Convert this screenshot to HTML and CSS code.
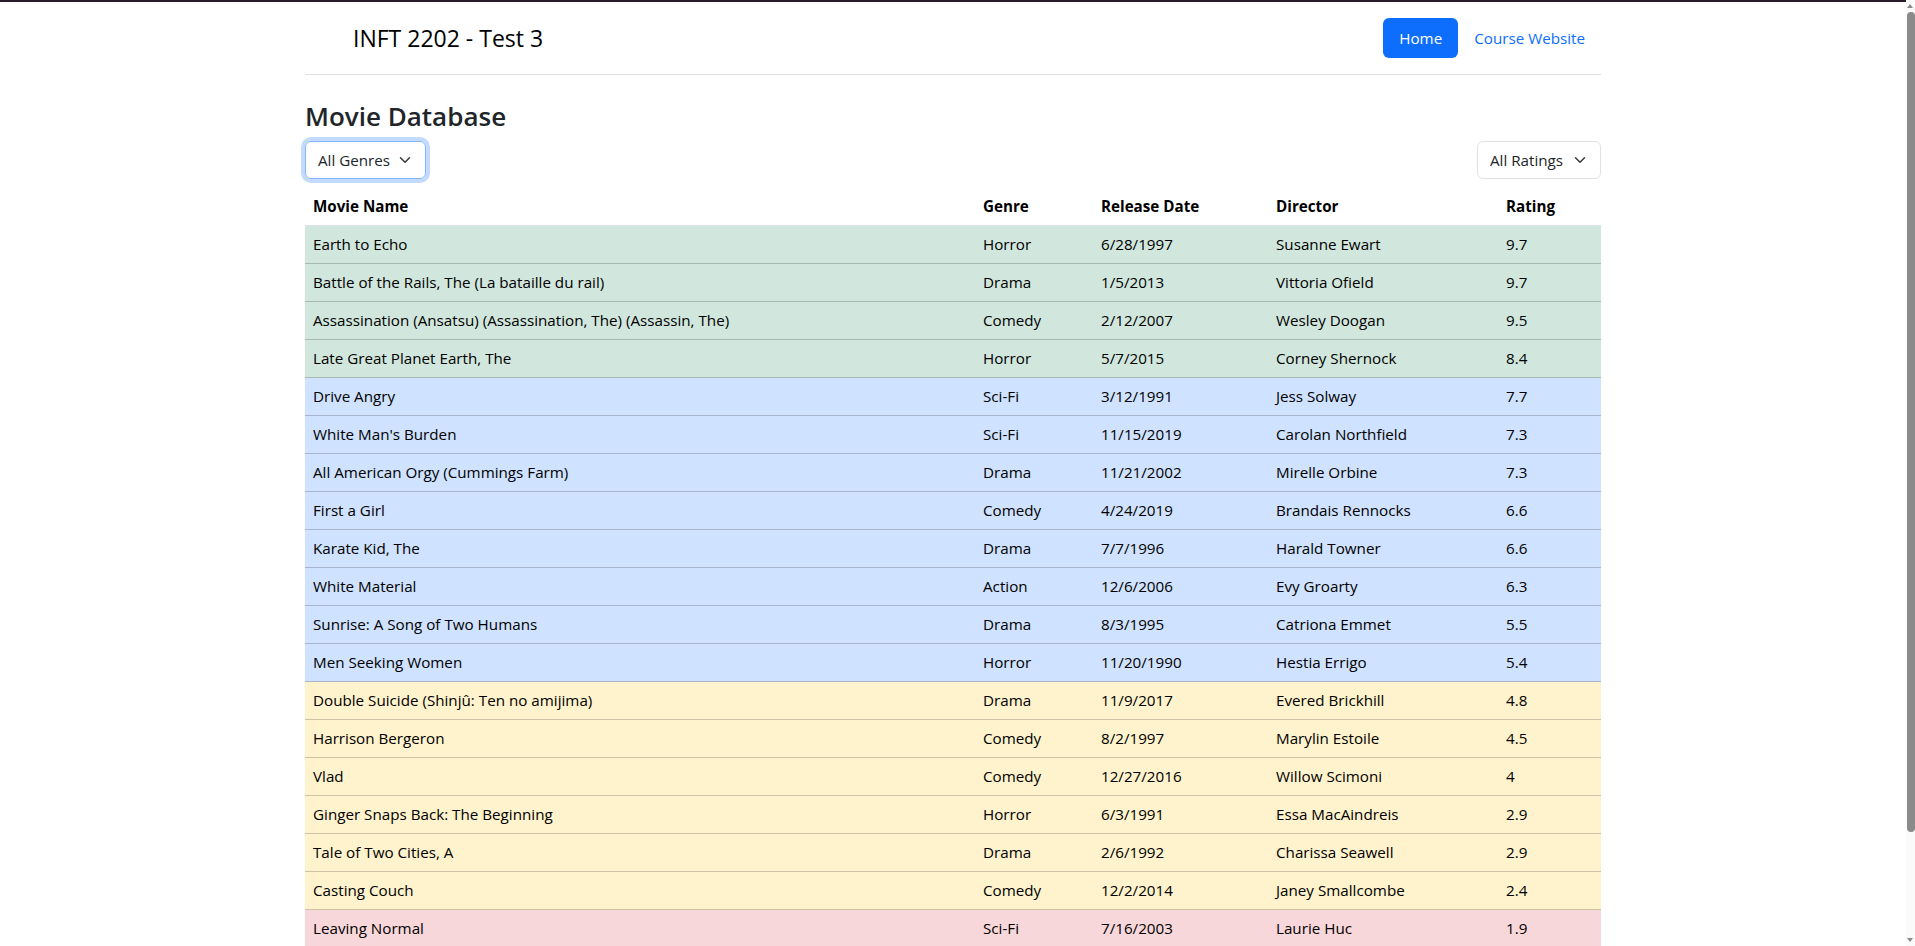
FILE: index.html
```html
<!DOCTYPE html>
<html lang="en">
<head>
<meta charset="utf-8">
<title>INFT 2202 - Test 3</title>
<link rel="stylesheet" href="styles.css">
</head>
<body>
<div class="topline"></div>
<div class="page">
  <div class="container">
    <header class="site-header">
      <a class="brand" href="#">
        <span class="brand-icon"></span>
        <span class="brand-text">INFT 2202 - Test 3</span>
      </a>
      <ul class="nav">
        <li><a class="nav-link active" href="#">Home</a></li>
        <li><a class="nav-link" href="#">Course Website</a></li>
      </ul>
    </header>

    <h3 class="title">Movie Database</h3>
    <div class="filters">
      <div class="select focused genres">All Genres
        <svg class="chev" width="16" height="12" viewBox="0 0 16 16"><path d="m2 5 6 6 6-6" fill="none" stroke="#343a40" stroke-width="2" stroke-linecap="round" stroke-linejoin="round"/></svg>
      </div>
      <div class="select ratings">All Ratings
        <svg class="chev" width="16" height="12" viewBox="0 0 16 16"><path d="m2 5 6 6 6-6" fill="none" stroke="#343a40" stroke-width="2" stroke-linecap="round" stroke-linejoin="round"/></svg>
      </div>
    </div>

    <table class="movies">
      <colgroup>
        <col class="c-name"><col class="c-genre"><col class="c-date"><col class="c-dir"><col class="c-rating">
      </colgroup>
      <thead>
        <tr><th>Movie Name</th><th>Genre</th><th>Release Date</th><th>Director</th><th>Rating</th></tr>
      </thead>
      <tbody>
        <tr class="success"><td>Earth to Echo</td><td>Horror</td><td>6/28/1997</td><td>Susanne Ewart</td><td>9.7</td></tr>
        <tr class="success"><td>Battle of the Rails, The (La bataille du rail)</td><td>Drama</td><td>1/5/2013</td><td>Vittoria Ofield</td><td>9.7</td></tr>
        <tr class="success"><td>Assassination (Ansatsu) (Assassination, The) (Assassin, The)</td><td>Comedy</td><td>2/12/2007</td><td>Wesley Doogan</td><td>9.5</td></tr>
        <tr class="success"><td>Late Great Planet Earth, The</td><td>Horror</td><td>5/7/2015</td><td>Corney Shernock</td><td>8.4</td></tr>
        <tr class="primary"><td>Drive Angry</td><td>Sci-Fi</td><td>3/12/1991</td><td>Jess Solway</td><td>7.7</td></tr>
        <tr class="primary"><td>White Man's Burden</td><td>Sci-Fi</td><td>11/15/2019</td><td>Carolan Northfield</td><td>7.3</td></tr>
        <tr class="primary"><td>All American Orgy (Cummings Farm)</td><td>Drama</td><td>11/21/2002</td><td>Mirelle Orbine</td><td>7.3</td></tr>
        <tr class="primary"><td>First a Girl</td><td>Comedy</td><td>4/24/2019</td><td>Brandais Rennocks</td><td>6.6</td></tr>
        <tr class="primary"><td>Karate Kid, The</td><td>Drama</td><td>7/7/1996</td><td>Harald Towner</td><td>6.6</td></tr>
        <tr class="primary"><td>White Material</td><td>Action</td><td>12/6/2006</td><td>Evy Groarty</td><td>6.3</td></tr>
        <tr class="primary"><td>Sunrise: A Song of Two Humans</td><td>Drama</td><td>8/3/1995</td><td>Catriona Emmet</td><td>5.5</td></tr>
        <tr class="primary"><td>Men Seeking Women</td><td>Horror</td><td>11/20/1990</td><td>Hestia Errigo</td><td>5.4</td></tr>
        <tr class="warning"><td>Double Suicide (Shinjû: Ten no amijima)</td><td>Drama</td><td>11/9/2017</td><td>Evered Brickhill</td><td>4.8</td></tr>
        <tr class="warning"><td>Harrison Bergeron</td><td>Comedy</td><td>8/2/1997</td><td>Marylin Estoile</td><td>4.5</td></tr>
        <tr class="warning"><td>Vlad</td><td>Comedy</td><td>12/27/2016</td><td>Willow Scimoni</td><td>4</td></tr>
        <tr class="warning"><td>Ginger Snaps Back: The Beginning</td><td>Horror</td><td>6/3/1991</td><td>Essa MacAindreis</td><td>2.9</td></tr>
        <tr class="warning"><td>Tale of Two Cities, A</td><td>Drama</td><td>2/6/1992</td><td>Charissa Seawell</td><td>2.9</td></tr>
        <tr class="warning"><td>Casting Couch</td><td>Comedy</td><td>12/2/2014</td><td>Janey Smallcombe</td><td>2.4</td></tr>
        <tr class="danger"><td>Leaving Normal</td><td>Sci-Fi</td><td>7/16/2003</td><td>Laurie Huc</td><td>1.9</td></tr>
      </tbody>
    </table>
  </div>
</div>
<div class="scrollbar">
  <span class="sb-up"></span>
  <span class="sb-thumb"></span>
  <span class="sb-down"></span>
</div>
</body>
</html>
```

FILE: styles.css
```css
html { overflow: hidden; }
* { box-sizing: border-box; }
body {
  margin: 0;
  font-family: "Open Sans", "Noto Sans", sans-serif;
  font-size: 16px;
  line-height: 1.5;
  color: #212529;
  background: #fff;
}
.topline { height: 2px; background: #2a1b2a; margin-right: 9px; }
.page { margin-right: 9px; }
.container { width: 1296px; margin: 0 auto; }

.site-header {
  display: flex;
  align-items: center;
  padding: 16px 0;
  border-bottom: 1px solid #dee2e6;
  margin-bottom: 24px;
}
.brand { display: flex; align-items: center; color: #000; text-decoration: none; margin-right: auto; }
.brand-icon { width: 40px; height: 32px; margin-right: 8px; }
.brand-text { font-size: 23px; line-height: 36px; }
.nav { display: flex; list-style: none; margin: 0; padding: 0; }
.nav-link {
  display: block;
  padding: 8px 16px;
  font-size: 15.2px;
  line-height: 24px;
  color: #0d6efd;
  text-decoration: none;
  border-radius: 6px;
}
.nav-link.active { background: #0d6efd; color: #fff; }

.title {
  margin: 0 0 8px;
  padding-top: 1px;
  font-size: 26px;
  font-weight: 600;
  line-height: 32.6px;
  color: #212529;
}

.filters { display: flex; justify-content: space-between; }
.select {
  position: relative;
  height: 38px;
  padding: 6px 36px 6px 12px;
  border: 1px solid #dee2e6;
  border-radius: 6px;
  font-size: 15.2px;
  line-height: 24px;
  color: #212529;
  white-space: nowrap;
}
.select.focused { border-color: #86b7fe; box-shadow: 0 0 0 4px rgba(13,110,253,.25); }
.select.genres { width: 121px; }
.select.ratings { width: 124px; }
.chev { position: absolute; right: 12px; top: 12px; }

.movies {
  width: 100%;
  margin-top: 9px;
  border-collapse: collapse;
  table-layout: fixed;
  font-size: 15.2px;
  line-height: 21px;
}
.c-name { width: 670px; }
.c-genre { width: 118px; }
.c-date { width: 175px; }
.c-dir { width: 230px; }
.movies th, .movies td {
  padding: 8px;
  text-align: left;
  border-bottom: 1px solid #dee2e6;
  white-space: nowrap;
  overflow: hidden;
}
.movies th { font-weight: 700; color: #000; }
.movies td { color: #000; }
tr.success td { background: #d1e7dd; border-color: #a7b9b1; }
tr.primary td { background: #cfe2ff; border-color: #a6b5cc; }
tr.warning td { background: #fff3cd; border-color: #ccc2a4; }
tr.danger td { background: #f8d7da; border-color: #c6acae; }

.scrollbar {
  position: fixed;
  top: 0; right: 0; bottom: 0;
  width: 9px;
  background: #fafafa;
}
.sb-up, .sb-down {
  position: absolute;
  left: 1px;
  width: 0; height: 0;
  border-left: 3.5px solid transparent;
  border-right: 3.5px solid transparent;
}
.sb-up { top: 4px; border-bottom: 4px solid #8a8a8a; }
.sb-down { bottom: 4px; border-top: 4px solid #8a8a8a; }
.sb-thumb {
  position: absolute;
  left: 1px; right: 0;
  top: 12px; height: 820px;
  background: #8a8a8a;
  border-radius: 4px;
}
```
